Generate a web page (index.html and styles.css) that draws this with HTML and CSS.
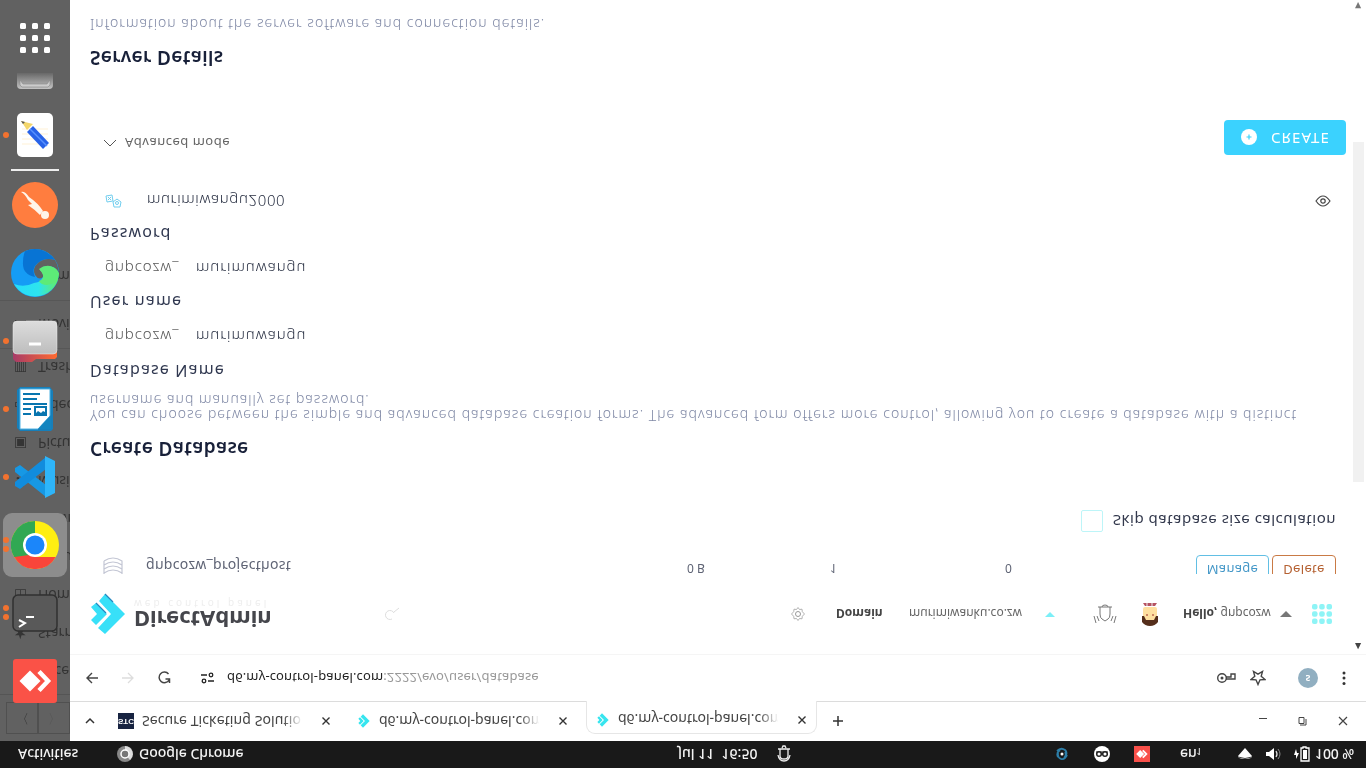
FILE: index.html
```html
<!DOCTYPE html>
<html lang="en">
<head>
<meta charset="utf-8">
<title>DirectAdmin - Create Database</title>
<link rel="stylesheet" href="styles.css">
</head>
<body>
<div class="screen">
  <div class="topbar">
    <span class="activities">Activities</span>
    <svg class="ic app-ic" width="18" height="18" viewBox="0 0 18 18"><circle cx="9" cy="9" r="8" fill="#888"/><path d="M9 1a8 8 0 0 1 5 14L9 9z" fill="#ddd"/><circle cx="9" cy="9" r="4" fill="#777" stroke="#fff" stroke-width="1.5"/></svg>
    <span class="app">Google Chrome</span>
    <span class="clock">Jul 11&nbsp; 16:50</span>
    <svg class="ic bell" width="14" height="18" viewBox="0 0 14 18"><path d="M1 4h12M3 4v7q0 3 4 3t4-3V4M5 3l1-2h2l1 2M1 10q1 6 6 6t6-6" fill="none" stroke="#eee" stroke-width="1.3"/></svg>
    <svg class="ic t1" width="14" height="14" viewBox="0 0 14 14"><g fill="none" stroke="#2d7ea8" stroke-width="1.8"><path d="M2 4q4-4 8-1 3 3 0 7"/><path d="M12 8q-2 5-6 4-4-2-3-6"/><path d="M5 3Q1 6 3 10M9 11q3-3 1-6"/></g><circle cx="7" cy="7" r="1.5" fill="#fff"/></svg>
    <svg class="ic t2" width="16" height="16" viewBox="0 0 16 16"><circle cx="8" cy="8" r="8" fill="#fff"/><path d="M2 6h12" stroke="#222"/><circle cx="5" cy="8" r="2.3" fill="#fff" stroke="#222" stroke-width="1.5"/><circle cx="11" cy="8" r="2.3" fill="#fff" stroke="#222" stroke-width="1.5"/></svg>
    <svg class="ic t3" width="16" height="16" viewBox="0 0 44 44"><rect width="44" height="44" fill="#f9504a"/><path d="M6 22l11-11 11 11-11 11z" fill="#fff"/><path d="M24 12l10 10-10 10" fill="none" stroke="#fff" stroke-width="5"/></svg>
    <span class="lang">en<sub>1</sub></span>
    <svg class="ic t4" width="16" height="13" viewBox="0 0 16 13"><path d="M8 0L1 8q0 3 7 3t7-3z" fill="#fff"/><path d="M1 9q7 3 14 0" stroke="#444" fill="none"/></svg>
    <svg class="ic t5" width="16" height="14" viewBox="0 0 16 14"><path d="M0 5h3l5-4v12L3 9H0z" fill="#fff"/><path d="M10 4q2 3 0 6" stroke="#ddd" fill="none" stroke-width="1.3"/><path d="M12 2q4 5 0 10" stroke="#888" fill="none"/></svg>
    <svg class="ic t6" width="17" height="16" viewBox="0 0 17 16"><path d="M3 3L1 9h2v4l3-6H4z" fill="#fff"/><path d="M10 1h3v1h3v13H8V2h2z" fill="none" stroke="#fff" stroke-width="1.3"/><rect x="10" y="4" width="4" height="9" fill="#fff"/></svg>
    <span class="batt">100 %</span>
  </div>

  <div class="workspace">
    <div class="dock">
      <div class="ghost">
        <div class="ghost-nav"><span>〈</span><span>〉</span></div>
        <div class="ghost-row"><i></i>Recent</div>
        <div class="ghost-row"><i>★</i>Starred</div>
        <div class="ghost-row"><i>◫</i>Home</div>
        <div class="ghost-row"><i>▯</i>Documents</div>
        <div class="ghost-row"><i>⇩</i>Downloads</div>
        <div class="ghost-row"><i>♫</i>Music</div>
        <div class="ghost-row"><i>▣</i>Pictures</div>
        <div class="ghost-row"><i>▭</i>Videos</div>
        <div class="ghost-row"><i>▥</i>Trash</div>
        <div class="ghost-row ruled"><i>▭</i>Movies</div>
        <div class="ghost-row ruled"><i></i>Home</div>
      </div>
      <div class="slots">
        <div class="slot"><svg class="ic" width="44" height="44" viewBox="0 0 44 44"><rect width="44" height="44" rx="3" fill="#fa5247"/><path d="M6.500 22L17 11.500 27.500 22 17 32.500z" fill="#fff"/><path d="M26 12.500L35 22l-9 9.500" fill="none" stroke="#fff" stroke-width="4.500"/></svg></div>
        <div class="slot"><b></b><b></b><svg class="ic" width="46" height="38" viewBox="0 0 46 38"><rect x="1" y="1" width="44" height="36" rx="5" fill="#595959" stroke="#303030" stroke-width="1.500"/><path d="M7 25l6 3-6 4M14 22h8" transform="translate(0 1)" fill="none" stroke="#fff" stroke-width="2"/></svg></div>
        <div class="slot active"><b></b><b></b><svg class="ic" width="48" height="48" viewBox="0 0 48 48"><circle cx="24" cy="24" r="24" fill="#ffee12"/><path d="M24 24V0A24 24 0 0 0 3.200 36L8 36 24 24z" fill="#31a853"/><path d="M24 0L36 24 24 24z" fill="#ffee12"/><path d="M44.800 36H24L14 28 3.200 36A24 24 0 0 0 44.800 36z" fill="#f9453a"/><path d="M3.200 36L13.500 18 18 34z" fill="#31a853"/><circle cx="24" cy="24" r="12" fill="#fff"/><circle cx="24" cy="24" r="9.500" fill="#1b86fa"/></svg></div>
        <div class="slot"><b></b><svg class="ic" width="44" height="44" viewBox="0 0 44 44"><path d="M2 13l5-3 26 20v12L2 17z" fill="#1798e4"/><path d="M2 31l5 3 26-20V2L2 27z" fill="#118cdd"/><path d="M32 1l10 5v32l-10 5z" fill="#2eb5fa"/></svg></div>
        <div class="slot"><b></b><svg class="ic" width="38" height="46" viewBox="0 0 38 46"><path d="M4 1h30l3 4v38l-2 2H4l-3-3V4z" fill="#167fba"/><path d="M4 3h30v27L22 43H4z" fill="#fff" stroke="#4eb2e3"/><path d="M22 43l13-14v14z" fill="#1384bf"/><path d="M7 8h17M7 13h14M7 18h24M7 23h8M7 28h8" stroke="#0875af" stroke-width="2"/><rect x="18" y="20" width="13" height="10" fill="#0875af"/><path d="M20 22h9v4l-2-1-2 2-3-2-2 2z" fill="#fff"/></svg></div>
        <div class="slot"><b></b><svg class="ic" width="46" height="42" viewBox="0 0 46 42"><defs><linearGradient id="fo"><stop stop-color="#a73b68"/><stop offset="1" stop-color="#ff6a30"/></linearGradient><linearGradient id="fg" x2="0" y2="1"><stop stop-color="#ddd"/><stop offset="1" stop-color="#bdbdbd"/></linearGradient></defs><path d="M1 25h44v12l-2 2H24l-4 3H4l-3-3z" fill="url(#fo)"/><rect x="1" y="1" width="44" height="33" rx="4" fill="url(#fg)" stroke="#eee" stroke-width=".5"/><path d="M17 24h12" stroke="#fff" stroke-width="3"/></svg></div>
        <div class="slot"><svg class="ic" width="48" height="48" viewBox="0 0 48 48"><defs><linearGradient id="e1" x1="0" x2="1"><stop stop-color="#28ddfb"/><stop offset=".55" stop-color="#2de4ee"/><stop offset="1" stop-color="#68ef5b"/></linearGradient></defs><circle cx="24" cy="24" r="24" fill="#159cf5"/><path d="M14 2.200A24 24 0 0 1 44 11Q34 8 27 14q-7 5-3 14-13-3-12-15 0-6 2-10.800z" fill="#0874d4"/><path d="M3 35q10 4 20-1 8-1 9-6 1-4-4-7 3-4 9-4 8 0 11 7A24 24 0 0 1 3 35z" fill="url(#e1)"/><path d="M44 11Q34 8 27 14q-6 5-3 12 4 6 8 2 1-4-3-7 2-4 8-4 8 0 11 7-1-8-4-13z" fill="#616161"/><path d="M28 20q5-4 11-3 7 2 8.800 8Q46 35 36 36q-6 0-8-4 5-2 4-6-1-3-4-6z" fill="#5deb78"/></svg></div>
        <div class="slot"><svg class="ic" width="46" height="46" viewBox="0 0 46 46"><circle cx="23" cy="23" r="23" fill="#ff7d3f"/><path d="M9 10q4-1 8 5 9 6 14 14l-3 4q-6-6-12-10l4-1-4-4q-3-6-7-8z" fill="#fff5ea"/><circle cx="33" cy="33" r="4" fill="#fff5ea"/></svg></div>
        <div class="divider"></div>
        <div class="slot"><b></b><svg class="ic" width="38" height="46" viewBox="0 0 38 46"><rect x="1" y="1" width="36" height="44" rx="5" fill="#fff"/><path d="M6 17h26M6 22h26M6 27h26M6 32h26" stroke="#fff1d5"/><path d="M5 9l6 9 6-6z" fill="#f3d66a"/><path d="M5 9l2 3 2-2z" fill="#555"/><path d="M11 20l6-6 16 17-6 6z" fill="#2862e8"/><path d="M14 17l17 17" stroke="#5891ff" stroke-width="1.500"/></svg></div>
        <div class="cut"><svg class="ic" width="36" height="16" viewBox="0 0 36 16"><defs><linearGradient id="dr" x2="0" y2="1"><stop stop-color="#686868"/><stop offset="1" stop-color="#c4c4c4"/></linearGradient></defs><path d="M0 0h36v12q0 4-4 4H4q-4 0-4-4z" fill="url(#dr)"/><path d="M3 7l3 4h24l3-4v5l-2 2H5l-2-2z" fill="#ccc" stroke="#888" stroke-width=".6"/></svg></div>
        <div class="grid"><svg class="ic" width="30" height="30" viewBox="0 0 30 30" fill="#fff"><rect width="6" height="6" rx="1.500"/><rect x="12" width="6" height="6" rx="1.500"/><rect x="24" width="6" height="6" rx="1.500"/><rect y="12" width="6" height="6" rx="1.500"/><rect x="12" y="12" width="6" height="6" rx="1.500"/><rect x="24" y="12" width="6" height="6" rx="1.500"/><rect y="24" width="6" height="6" rx="1.500"/><rect x="12" y="24" width="6" height="6" rx="1.500"/><rect x="24" y="24" width="6" height="6" rx="1.500"/></svg></div>
      </div>
    </div>

    <div class="browser">
      <div class="tabs">
        <svg class="ic tab-menu" width="10" height="10" viewBox="0 0 10 10"><path d="M1 7l4-4 4 4" fill="none" stroke="#333" stroke-width="1.500"/></svg>
        <div class="tab first"><span class="stc">STC</span><span class="title">Secure Ticketing Solutions</span><svg class="ic x" width="8" height="8" viewBox="0 0 8 8"><path d="M.5.5l7 7M7.500.5l-7 7"/></svg></div>
        <div class="tab"><svg class="ic fav" width="14" height="14" viewBox="0 0 36 42"><path d="M15 1l20 20-20 20-7-7 13-13L8 8zM1 14l5-4 11 11L6 32l-5-5 6-6z" fill="#36e5ef"/></svg><span class="title">d6.my-control-panel.com</span><svg class="ic x" width="8" height="8" viewBox="0 0 8 8"><path d="M.5.5l7 7M7.500.5l-7 7"/></svg></div>
        <div class="tab current"><svg class="ic fav" width="14" height="14" viewBox="0 0 36 42"><path d="M15 1l20 20-20 20-7-7 13-13L8 8zM1 14l5-4 11 11L6 32l-5-5 6-6z" fill="#36e5ef"/></svg><span class="title">d6.my-control-panel.com</span><svg class="ic x" width="8" height="8" viewBox="0 0 8 8"><path d="M.5.5l7 7M7.500.5l-7 7"/></svg></div>
        <svg class="ic plus" width="12" height="12" viewBox="0 0 12 12"><path d="M6 1v10M1 6h10" stroke="#333" stroke-width="1.500"/></svg>
        <svg class="ic win" width="90" height="12" viewBox="0 0 90 12" fill="none" stroke="#444" stroke-width="1.200"><path d="M0 3.500h8M80 2l8 8M88 2l-8 8"/><path d="M40 2.500h5v6h-5zM47 4v6h-6" stroke-width="1"/></svg>
      </div>
      <div class="toolbar">
        <svg class="ic back" width="12" height="12" viewBox="0 0 12 12"><path d="M12 6H1M6 1L1 6l5 5" fill="none" stroke="#444" stroke-width="1.400"/></svg>
        <svg class="ic fwd" width="12" height="12" viewBox="0 0 12 12"><path d="M0 6h11M6 1l5 5-5 5" fill="none" stroke="#ddd" stroke-width="1.300"/></svg>
        <svg class="ic reload" width="14" height="14" viewBox="0 0 14 14"><path d="M11.500 3A5.300 5.300 0 1 0 12 9M12.500 12V8H8.500" fill="none" stroke="#444" stroke-width="1.500"/></svg>
        <svg class="ic site" width="13" height="12" viewBox="0 0 13 12"><path d="M0 3h6M7 9h6" stroke="#222" stroke-width="1.600"/><circle cx="10" cy="3" r="1.800" fill="none" stroke="#222" stroke-width="1.300"/><circle cx="3" cy="9" r="1.800" fill="none" stroke="#222" stroke-width="1.300"/></svg>
        <span class="url">d6.my-control-panel.com<em>:2222/evo/user/database</em></span>
        <svg class="ic key" width="19" height="12" viewBox="0 0 19 12"><circle cx="5" cy="6" r="4.300" fill="none" stroke="#444" stroke-width="1.400"/><circle cx="5" cy="6" r="1.500" fill="#444"/><path d="M9 7h9V2h-4v3H9" fill="none" stroke="#444" stroke-width="1.400"/></svg>
        <svg class="ic star" width="16" height="16" viewBox="0 0 16 16"><path d="M8 14.500L6 9.800 1 9.500l3.800-3.200L3.500 1.500 8 4.200l4.500-2.700-1.300 4.800L15 9.500l-5 .3z" fill="none" stroke="#444" stroke-width="1.400"/></svg>
        <span class="avatar">s</span>
        <svg class="ic dots" width="4" height="14" viewBox="0 0 4 14" fill="#333"><circle cx="2" cy="2" r="1.500"/><circle cx="2" cy="7" r="1.500"/><circle cx="2" cy="12.500" r="1.500"/></svg>
      </div>

      <div class="viewport">
        <div class="page">
          <div class="header">
            <div class="logo">
              <svg class="ic" width="35" height="42" viewBox="0 0 35 42"><path d="M15 1l20 20-20 20-7-6 13-14L9 8z" fill="#38e0f8"/><path d="M1 14l5-4 11 11L6 32l-5-5 6-6z" fill="#38e0f8"/><path d="M15 1l8 8M6 10l10 10" stroke="#2587bf" stroke-width="1.200"/></svg>
              <div class="brand"><strong>DirectAdmin</strong><small>web control panel</small></div>
            </div>
            <svg class="ic search" width="16" height="14" viewBox="0 0 16 14"><path d="M10 6A4.500 4.500 0 1 0 8 12M10 5l5-4" fill="none" stroke="#ddd"/></svg>
            <svg class="ic gear" width="14" height="14" viewBox="0 0 14 14"><path d="M7 .5l1.500 2 2.500-.3.300 2.500 2.200 2.300-2.200 2.300-.3 2.500-2.500-.3-1.500 2-1.500-2-2.500.3-.3-2.500L.5 7l2.200-2.300.3-2.500 2.500.3z" fill="none" stroke="#aaa" stroke-width=".9"/><circle cx="7" cy="7" r="2.500" fill="none" stroke="#999"/></svg>
            <strong class="domain-l">Domain</strong>
            <span class="domain">murimiwanku.co.zw</span>
            <svg class="ic up" width="10" height="6" viewBox="0 0 10 6"><path d="M0 6l5-5 5 5z" fill="#7ceff7"/></svg>
            <svg class="ic alarm" width="24" height="20" viewBox="0 0 24 20" fill="none" stroke="#777"><path d="M5 3h14M7 3v7q0 4 2 5l3 2 3-2q2-1 2-5V3M9 3q0-2 3-2t3 2M1 12l2 7M4 12l2 5M23 12l-2 7M20 12l-2 5"/></svg>
            <svg class="ic face" width="18" height="24" viewBox="0 0 18 24"><path d="M2 1h14l-2 3H4z" fill="#b55261"/><path d="M6 1v3M11 1v3" stroke="#eee"/><rect x="2" y="5" width="14" height="13" rx="2" fill="#ffe0a0"/><path d="M1 14h2l2 4h8l2-4h2v6q-3 4-8 4t-8-4z" fill="#552e1b"/><path d="M6 12v2M12 12v2" stroke="#be6a50" stroke-width="1.500"/></svg>
            <span class="hello"><strong>Hello,</strong> gnpcozw</span>
            <svg class="ic up2" width="12" height="7" viewBox="0 0 12 7"><path d="M0 7l6-6 6 6z" fill="#777"/></svg>
            <svg class="ic apps" width="20" height="20" viewBox="0 0 20 20" fill="#8ef4f6"><rect width="5.500" height="5.500" rx="2"/><rect x="7.200" width="5.500" height="5.500" rx="2"/><rect x="14.500" width="5.500" height="5.500" rx="2"/><rect y="7.200" width="5.500" height="5.500" rx="2"/><rect x="7.200" y="7.200" width="5.500" height="5.500" rx="2"/><rect x="14.500" y="7.200" width="5.500" height="5.500" rx="2"/><rect y="14.500" width="5.500" height="5.500" rx="2"/><rect x="7.200" y="14.500" width="5.500" height="5.500" rx="2"/><rect x="14.500" y="14.500" width="5.500" height="5.500" rx="2"/></svg>
          </div>

          <div class="db-row">
            <svg class="ic db" width="20" height="18" viewBox="0 0 20 18" fill="none" stroke="#c3c6d4" stroke-width="1.200"><path d="M1 4q9-6 18 0v13M1 4v13M1 8q9-6 18 0M1 12q9-6 18 0M1 16q9-6 18 0"/></svg>
            <span class="db-name">gnpcozw_projecthost</span>
            <span class="size">0 B</span><span class="users">1</span><span class="tables">0</span>
            <span class="btn manage">Manage</span><span class="btn delete">Delete</span>
          </div>
          <label class="skip"><span class="box"></span><span class="skip-t">Skip database size calculation</span></label>

          <h2 class="h-create">Create Database</h2>
          <p class="desc"><span class="d1">You can choose between the simple and advanced database creation forms. The advanced form offers more control, allowing you to create a database with a distinct</span><br><span class="d2">username and manually set password.</span></p>
          <div class="label l1">Database Name</div>
          <div class="field"><span class="prefix">gnpcozw_</span><span class="val">murimuwangu</span></div>
          <div class="label">User name</div>
          <div class="field"><span class="prefix">gnpcozw_</span><span class="val">murimuwangu</span></div>
          <div class="label">Password</div>
          <div class="field">
            <svg class="ic dice" width="17" height="14" viewBox="0 0 17 14" fill="none" stroke="#70cdee"><path d="M1 2l6-1 1 6-6 1zM8 8l4-3 4 3-1 5H9zM3 3l3 3M6 3L3 6"/><circle cx="12" cy="9" r="1.500"/></svg>
            <span class="pass">murimiwangu2000</span>
            <svg class="ic eye" width="16" height="12" viewBox="0 0 16 12" fill="none" stroke="#444" stroke-width="1.200"><path d="M1 6q7-10 14 0-7 10-14 0z"/><circle cx="8" cy="6" r="2.200"/></svg>
          </div>
          <div class="actions">
            <span class="adv"><svg class="ic" width="14" height="8" viewBox="0 0 14 8"><path d="M1 1l6 6 6-6" fill="none" stroke="#555"/></svg>Advanced mode</span>
            <span class="create"><svg class="ic" width="16" height="16" viewBox="0 0 16 16"><circle cx="8" cy="8" r="8" fill="#fff"/><path d="M8 5.500v5M5.500 8h5" stroke="#39d3fb" stroke-width="1.200"/></svg><span class="create-t">CREATE</span></span>
          </div>
          <h2 class="h-server">Server Details</h2>
          <p class="desc">Information about the server software and connection details.</p>
        </div>
        <div class="scroll"><i class="sa">▲</i><div class="thumb"></div><i class="sa low">▼</i></div>
      </div>
    </div>
  </div>
</div>
</body>
</html>
```
FILE: styles.css
```css
* { box-sizing: border-box; }
body { margin: 0; background: #fff; overflow: hidden; font-family: "Noto Sans", sans-serif; }
i, em { font-style: normal; }
h2, p { margin: 0; font-weight: normal; }

/* The whole desktop is mirrored top to bottom; icons are drawn as displayed. */
.screen { width: 1366px; height: 768px; overflow: hidden; transform: scaleY(-1); display: flex; flex-direction: column; }
.ic { transform: scaleY(-1); display: block; flex: none; }
span, strong { white-space: nowrap; }

.topbar { height: 27px; flex: none; background: #191919; color: #f4f4f4; font-size: 14px; font-weight: 500; display: flex; align-items: center; }
.activities { width: 99px; padding-left: 18px; }
.app-ic { margin: 0 5px 0 17px; }
.app { width: 539px; }
.clock { width: 82px; }
.bell { margin-left: 17px; }
.t1 { margin-left: auto; margin-right: 25px; }
.t2 { margin-right: 24px; }
.t3 { margin-right: 30px; }
.lang { width: 57px; }
.lang sub { font-size: 8px; line-height: 8px; vertical-align: -1px; }
.t4 { margin-right: 13px; }
.t5 { margin-right: 11px; }
.t6 { margin-right: 5px; }
.batt { width: 51px; letter-spacing: -.1px; }

.workspace { flex: 1; display: flex; min-height: 0; }
.dock { width: 70px; flex: none; background: #616161; position: relative; overflow: hidden; }
.ghost { position: absolute; inset: 0; color: #343434; font-size: 14px; }
.ghost-nav { height: 47px; border-bottom: 1px solid #555; display: flex; margin-bottom: 3px; padding: 7px 0 7px 6px; }
.ghost-nav span { width: 35px; border: 1px solid #505050; text-align: center; font-size: 13px; line-height: 28px; }
.ghost-nav span + span { color: #555; }
.ghost-row { height: 38px; display: flex; align-items: center; white-space: nowrap; }
.ghost-row i { width: 24px; margin-left: 14px; flex: none; font-family: "DejaVu Sans", sans-serif; }
.ghost-row.ruled { height: 48px; border-top: 1px solid #575757; }
.slots { position: absolute; inset: 0; padding-top: 26px; display: flex; flex-direction: column; }
.slot { height: 68px; flex: none; display: grid; place-items: center; position: relative; }
.slot b { position: absolute; left: 3px; top: 31px; width: 6px; height: 6px; border-radius: 3px; background: #f2722f; }
.slot b:first-child:has(+ b) { top: 27px; }
.slot b + b { top: 36px; }
.active::before { content: ""; position: absolute; left: 3px; top: 2px; width: 64px; height: 64px; border-radius: 9px; background: #8d8d8d; }
.active .ic { position: relative; }
.divider { height: 2px; flex: none; background: #eee; margin: 0 11px; }
.cut { height: 30px; flex: none; display: flex; justify-content: center; align-items: flex-start; padding-top: 12px; }
.grid { flex: 1; display: flex; justify-content: center; padding-top: 18px; }

.browser { flex: 1; display: flex; flex-direction: column; min-width: 0; }
.tabs { height: 40px; flex: none; display: flex; align-items: center; border-bottom: 1px solid #dcdcdc; padding-left: 15px; font-size: 14px; color: #444; }
.tab-menu { margin-right: 15px; }
.tab { width: 238px; height: 33px; display: flex; align-items: center; padding-left: 9px; }
.tab.first { padding-left: 8px; }
.tab.current { width: 231px; align-self: flex-end; background: #fff; border: 1px solid #e6e6e6; border-bottom: 0; border-radius: 9px 9px 0 0; margin-bottom: -1px; padding-bottom: 6px; }
.stc { width: 16px; height: 16px; background: #172341; color: #fff; font: bold 8px/16px "Liberation Sans", sans-serif; text-align: center; margin-right: 8px; }
.fav { margin-right: 8px; }
.title { width: 162px; overflow: hidden; mask-image: linear-gradient(90deg, #000 87%, transparent 99%); }
.first .title { letter-spacing: .1px; }
.x { margin-left: 18px; stroke: #333; stroke-width: 1.4; }
.plus { margin-left: 15px; }
.win { margin-left: auto; margin-right: 17px; }

.toolbar { height: 47px; flex: none; display: flex; align-items: center; padding-left: 16px; border-bottom: 1px solid #f5f5f5; }
.fwd { margin-left: 24px; }
.reload { margin-left: 23px; }
.site { margin-left: 30px; }
.url { font-size: 13px; letter-spacing: .14px; margin-left: 13px; color: #222; }
.url em { color: #999; }
.key { margin-left: auto; margin-right: 14px; }
.star { margin-right: 32px; }
.avatar { width: 20px; height: 20px; border-radius: 50%; background: #91afc1; color: #fff; font-size: 10px; font-weight: 600; line-height: 18px; text-align: center; margin-right: 24px; }
.dots { margin-right: 20px; }

.viewport { flex: 1; display: flex; min-height: 0; }
.page { width: 1283px; padding: 0 7px 0 20px; flex: none; }
.header { height: 80px; display: flex; align-items: center; font-size: 12px; color: #666; }
.header strong { color: #444; }
.logo { display: flex; align-items: center; width: 294px; }
.brand { margin-left: 9px; display: flex; flex-direction: column; }
.brand strong { font-size: 22px; line-height: 20px; color: #45464c; }
.brand small { font-size: 10px; line-height: 12px; color: #eee; letter-spacing: 3px; white-space: nowrap; }
.search { flex: none; }
.gear { margin-left: 391px; }
.domain-l { margin-left: 31px; width: 73px; }
.domain { width: 136px; }
.alarm { margin-left: 38px; }
.face { margin-left: 24px; }
.hello { margin-left: 24px; width: 97px; }
.apps { margin-left: 20px; margin-right: -2px; }

.db-row { height: 19px; display: flex; align-items: flex-end; overflow: hidden; font-size: 14px; color: #5f6475; line-height: 23px; }
.db { margin: 0 22px 2px 13px; }
.db-name { width: 542px; letter-spacing: .3px; padding-left: 1px; }
.size { width: 143px; font-size: 12px; line-height: 27px; }
.users { width: 175px; font-size: 12px; line-height: 27px; }
.tables { width: 191px; font-size: 12px; line-height: 27px; }
.btn { flex: none; height: 26px; border: 1px solid; border-radius: 4px; font-size: 13px; letter-spacing: .3px; line-height: 21px; text-align: center; }
.manage { width: 73px; color: #4598c8; border-color: #62bfe4; margin-right: 3px; }
.delete { width: 64px; color: #b56132; border-color: #c97a45; }
.skip { height: 67px; display: flex; align-items: center; justify-content: flex-end; padding-right: 10px; font-size: 15px; letter-spacing: .5px; color: #33394d; }
.box { width: 22px; height: 22px; border: 1px solid #bdf5f8; border-radius: 2px; margin-right: 10px; }
.h-create, .h-server { font-size: 19px; letter-spacing: .35px; font-weight: 600; line-height: 30px; color: #182039; }
.h-create { margin-top: 24px; }
.desc { font-size: 14px; letter-spacing: 1.02px; white-space: nowrap; line-height: 15px; color: #7f88a5; margin-top: 11px; font-weight: 300; margin-bottom: 6px; }
.label { height: 36px; font-size: 16px; letter-spacing: 1.13px; line-height: 35px; color: #303850; }
.label.l1 { line-height: 32px; }
.field { height: 32px; display: flex; align-items: center; font-size: 15px; letter-spacing: .93px; color: #282f42; padding: 0 0 4px 15px; font-weight: 300; }
.prefix { width: 91px; color: #555; }
.pass { letter-spacing: .63px; }
.dice { margin-right: 25px; }
.eye { margin-left: auto; margin-right: 15px; }
.actions { height: 35px; margin-top: 28px; display: flex; align-items: flex-start; padding-left: 13px; font-size: 13px; letter-spacing: .5px; color: #666; }
.adv { display: flex; align-items: center; gap: 8px; height: 24px; }
.create { margin-left: auto; width: 122px; height: 35px; border-radius: 4px; background: #3bd2fe; color: #fff; display: flex; align-items: center; padding-left: 17px; font-size: 15px; letter-spacing: 1.1px; flex: none; }
.create-t { margin-left: 14px; line-height: 30px; margin-top: -3px; }
.h-server { margin-top: 47px; }
.scroll { width: 13px; display: flex; flex-direction: column; align-items: center; }
.sa { font: 8px/10px "DejaVu Sans", sans-serif; color: #444; margin-top: 3px; margin-left: -3px; }
.thumb { width: 11px; height: 340px; background: #f1f1f1; margin-top: 159px; margin-left: -2px; }
.low { margin-top: auto; color: #777; }
```
